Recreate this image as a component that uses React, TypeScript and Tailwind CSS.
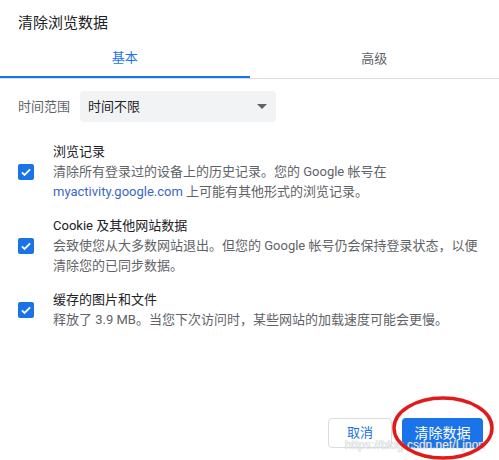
const items = [
  {
    title: "浏览记录",
    desc: (
      <>
        清除所有登录过的设备上的历史记录。您的 Google 帐号在
        <br />
        <span className="text-[#3b68c4]">myactivity.google.com</span> 上可能有其他形式的浏览记录。
      </>
    ),
  },
  {
    title: "Cookie 及其他网站数据",
    desc: (
      <>
        会致使您从大多数网站退出。但您的 Google 帐号仍会保持登录状态，以便
        <br />
        清除您的已同步数据。
      </>
    ),
  },
  {
    title: "缓存的图片和文件",
    desc: <>释放了 3.9 MB。当您下次访问时，某些网站的加载速度可能会更慢。</>,
  },
];

function Checkbox() {
  return (
    <div className="flex-shrink-0 w-4 h-4 rounded-[2px] bg-[#1a73e8] flex items-center justify-center">
      <svg viewBox="0 0 24 24" className="w-[14px] h-[14px]" fill="none">
        <path d="M5 12.5l4.5 4.5L19 7.5" stroke="#fff" strokeWidth="3" />
      </svg>
    </div>
  );
}

export default function App() {
  return (
    <div className="relative w-[499px] h-[460px] bg-white flex flex-col overflow-hidden font-['Roboto','Noto_Sans_CJK_SC',sans-serif]">
      {/* Title */}
      <div className="h-[40px] pt-[13px] px-[18px] text-[15px] leading-[20px] text-[#202124]">
        清除浏览数据
      </div>

      {/* Tabs */}
      <div className="flex border-b border-[#dadce0]">
        <div className="flex-1 h-[38px] flex items-center justify-center border-b-2 border-[#1a73e8] text-[13px] text-[#1a73e8] -mb-px">
          基本
        </div>
        <div className="flex-1 h-[38px] flex items-center justify-center text-[13px] text-[#5f6368]">
          高级
        </div>
      </div>

      {/* Time range */}
      <div className="mt-[12px] px-[18px] flex items-center">
        <span className="w-[62px] text-[13px] text-[#5f6368]">时间范围</span>
        <div className="w-[196px] h-[31px] rounded-[4px] bg-[#f1f3f4] flex items-center justify-between pl-[8px] pr-[9px] text-[13px] text-[#202124]">
          <span>时间不限</span>
          <svg viewBox="0 0 10 5" className="w-[10px] h-[5px]">
            <path d="M0 0h10L5 5z" fill="#5f6368" />
          </svg>
        </div>
      </div>

      {/* Items */}
      <div className="mt-[20px] px-[18px] flex flex-col gap-[14px]">
        {items.map((it) => (
          <div key={it.title} className="flex items-center gap-[19px]">
            <Checkbox />
            <div className="text-[13px] leading-[20px]">
              <div className="text-[#202124]">{it.title}</div>
              <div className="text-[#5f6368]">{it.desc}</div>
            </div>
          </div>
        ))}
      </div>

      {/* Footer */}
      <div className="mt-auto pb-[12px] pr-[16px] flex justify-end gap-[10px]">
        <button className="w-[64px] h-[30px] rounded-[4px] border border-[#dadce0] bg-white text-[13px] text-[#1a73e8]">
          取消
        </button>
        <button className="w-[81px] h-[30px] rounded-[4px] bg-[#1a73e8] text-[14px] text-white">
          清除数据
        </button>
      </div>

      {/* Watermark */}
      <div className="absolute right-[14px] top-[437px] text-[12px] leading-[16px] font-['Liberation_Sans',sans-serif] text-white/80 [text-shadow:0_0_1px_#9aa0a6]">
        https://blog.csdn.net/Ljnon
      </div>

      {/* Red annotation */}
      <svg className="absolute left-[390px] top-[394px] w-[106px] h-[68px]" viewBox="0 0 106 68" fill="none">
        <ellipse cx="53" cy="34" rx="49" ry="30" stroke="#e01b1b" strokeWidth="3.5" />
      </svg>
    </div>
  );
}
